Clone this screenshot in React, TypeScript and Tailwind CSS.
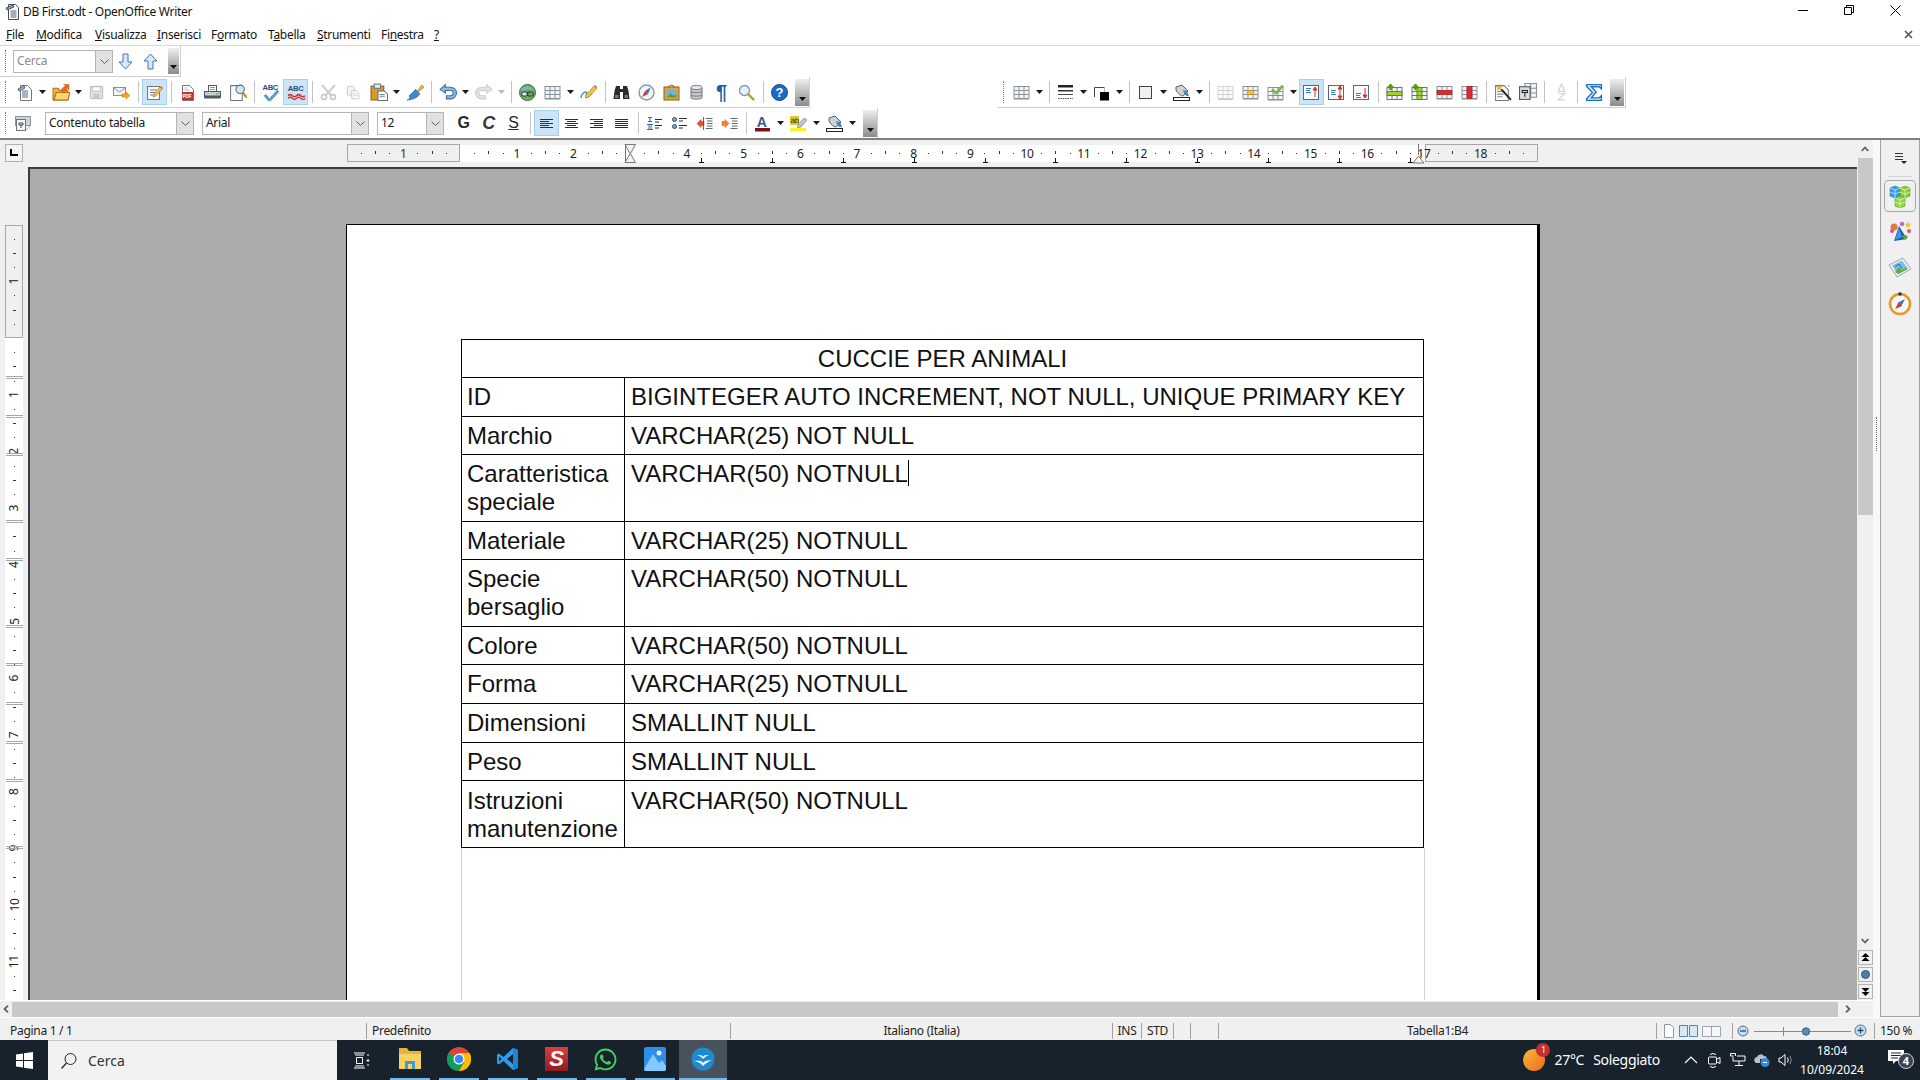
import React from "react";
import { FaWhatsapp } from "react-icons/fa";

type C = { children?: React.ReactNode };
const Sv = ({ children, s = 17 }: C & { s?: number }) => (
  <svg width={s} height={s} viewBox="0 0 17 17" className="block shrink-0">{children}</svg>
);
const Page = ({ x = 3, y = 1, w = 11, h = 15, st = "#6b7785" }: any) => (
  <path d={`M${x + .5} ${y + .5}h${w - 4}l4 4v${h - 4}h-${w}z`} fill="#fff" stroke={st} />
);
const Grid = ({ st = "#8b9199", bg = "#f4f5f6" }: any) => (
  <g>
    <rect x="1" y="2.5" width="15" height="12" fill={bg} stroke={st} />
    <path d="M1 6.5h15M1 10.5h15M6 2.5v12M11 2.5v12" stroke={st} fill="none" />
    <path d="M1 15.5h15" stroke="#c4c7ca" />
  </g>
);
const Tiny = ({ x, y, size, fill, children, weight = 700 }: any) => (
  <text x={x} y={y} fontSize={size} fill={fill} fontWeight={weight} fontFamily="Liberation Sans, sans-serif">{children}</text>
);

const Ic: Record<string, React.ReactNode> = {
  dn: <Sv><path d="M6 1h5v8h4l-6.500 7L2 9h4z" fill="#dbe9f6" stroke="#3f74a8" /></Sv>,
  up: <Sv><path d="M6 16h5V8h4L8.500 1 2 8h4z" fill="#dbe9f6" stroke="#3f74a8" /></Sv>,
  neww: <Sv><Page x={4} y={1} /><path d="M2 5l6-3 1 2-6 3zM6 7h6M6 9h6M6 11h6M6 13h6" stroke="#46586b" fill="#9fb2c4" strokeWidth=".9" /></Sv>,
  open: <Sv s={18}><path d="M1 5h5l1 2h8v9H1z" fill="#f0b43c" stroke="#a8701a" /><path d="M2 16l2-7h13l-2 7z" fill="#fbd46a" stroke="#a8701a" /><path d="M8 7l5-5-2-.5h5v5l-1.3-1.700L11 9z" fill="#ee6c1e" stroke="#c24a10" strokeWidth=".5" /></Sv>,
  save: <Sv s={15}><rect x="1.500" y="1.500" width="14" height="14" rx="1" fill="#e2e2e2" stroke="#b0b0b0" /><rect x="4" y="2" width="9" height="5" fill="#fafafa" stroke="#c0c0c0" /><rect x="5" y="10" width="7" height="5" fill="#c8c8c8" /></Sv>,
  mail: <Sv><rect x=".5" y="3.500" width="12" height="8" fill="#f5f5f5" stroke="#8a8f96" /><path d="M1 4l5.500 4L12 4" fill="none" stroke="#8a8f96" /><path d="M9 10h4V8l4 3.500-4 3.500v-2H9z" fill="#f2a020" stroke="#c77c10" strokeWidth=".5" /></Sv>,
  edit: <Sv><rect x="1.500" y="2.500" width="12" height="13" fill="#fff" stroke="#6b7785" /><path d="M4 6h7M4 8.500h5M4 11h4" stroke="#6b7785" /><path d="M7 13l1-3 6-7 2 2-6 7z" fill="#f6c244" stroke="#a0701a" strokeWidth=".6" /><path d="M14 3l1-1 2 2-1 1z" fill="#e2574c" /></Sv>,
  pdf: <Sv><Page x={3} y={1} w={11} h={15} /><path d="M5.500 4h3M5.500 6h5" stroke="#bbb" /><rect x="3" y="8" width="11" height="8" fill="#c9302c" /><Tiny x={3.6} y={14} size={4.8} fill="#fff">PDF</Tiny></Sv>,
  print: <Sv><rect x="4.500" y="1.500" width="8" height="6" fill="#fff" stroke="#4f5a66" /><path d="M6 3.500h5M6 5.500h5" stroke="#8b97a5" /><rect x=".5" y="7.500" width="16" height="6" fill="#c9ced3" stroke="#4f5a66" /><rect x=".5" y="11.500" width="16" height="3" fill="#4f5a66" /><rect x="12" y="9" width="3" height="1.500" fill="#8fc13e" /></Sv>,
  prev: <Sv s={18}><Page x={1} y={2} w={11} h={14} /><circle cx="10.500" cy="6" r="4" fill="#cfe6f7" stroke="#5d6c7b" /><path d="M13 9l4 5" stroke="#c48a20" strokeWidth="2" /></Sv>,
  spell: <Sv s={18}><Tiny x={.5} y={7} size={7.2} fill="#2a4d78">ABC</Tiny><path d="M4 11l3 4 7-8 2 1-9 10-5-6z" fill="#5fa4dc" stroke="#2f6ea6" strokeWidth=".6" /></Sv>,
  auto: <Sv s={18}><Tiny x={.8} y={8} size={7.2} fill="#2a4d78">ABC</Tiny><path d="M1 12q2-2 4 0t4 0 4 0 4 0" fill="none" stroke="#d12d2d" strokeWidth="1.500" /><path d="M1 14.500q2-2 4 0t4 0 4 0 4 0" fill="none" stroke="#d12d2d" strokeWidth="1.200" /></Sv>,
  cut: <Sv><path d="M2 1l9 10M15 1L6 11" stroke="#cfcfcf" strokeWidth="2" /><circle cx="4" cy="13" r="2.500" fill="none" stroke="#c4c4c4" strokeWidth="1.500" /><circle cx="13" cy="13" r="2.500" fill="none" stroke="#c4c4c4" strokeWidth="1.500" /></Sv>,
  copy: <Sv s={15}><path d="M1.500 1.500h6l2 2v8h-8z" fill="#f4f4f4" stroke="#c8c8c8" /><path d="M6.500 6.500h6l2 2v7h-8z" fill="#fafafa" stroke="#c8c8c8" /><path d="M8 10h5M8 12h5" stroke="#d8d8d8" /></Sv>,
  paste: <Sv s={18}><rect x="1" y="3" width="12" height="13" fill="#d99b2b" stroke="#8c5f10" /><rect x="4" y="1" width="6" height="4" fill="#e9e9e9" stroke="#6b7785" /><path d="M7.500 7.500h6l3 3v6h-9z" fill="#fff" stroke="#5c6d80" /><path d="M9 11h5M9 13h5" stroke="#7a8a9a" /></Sv>,
  brush: <Sv s={18}><path d="M11 7l4-5 2 2-5 4z" fill="#e9bb3e" stroke="#9b7412" strokeWidth=".6" /><path d="M9 6l4 4c-1 3-6 6-12 6 4-1 2-3 2-4 1-1 4-3 6-6z" fill="#3f86d6" stroke="#1e568f" strokeWidth=".6" /></Sv>,
  undo: <Sv s={18}><path d="M5 4h6a5.500 5.500 0 0 1 0 11H7v-3h4a2.500 2.500 0 0 0 0-5H6v2.500L1 6 6 1.500V4z" fill="#8eb9e0" stroke="#3f6f9e" /></Sv>,
  redo: <Sv s={18}><path d="M12 4H6a5.500 5.500 0 0 0 0 11h4v-3H6a2.500 2.500 0 0 1 0-5h5v2.500L16 6 11 1.500V4z" fill="#e4e4e4" stroke="#cdcdcd" /></Sv>,
  link: <Sv><circle cx="8.500" cy="8.500" r="8" fill="#6fae59" stroke="#3f6e3a" /><path d="M3 4q5-3 10 0l1 3-5-2-4 2-3-1z" fill="#76b8c9" /><rect x="2.500" y="8" width="6.500" height="4" rx="2" fill="#d8e6ea" stroke="#26323c" /><rect x="8" y="8" width="6.500" height="4" rx="2" fill="none" stroke="#26323c" /></Sv>,
  grid: <Sv><Grid /></Sv>,
  draw: <Sv><path d="M1 14c0-4 3-6 5-6s-1 5 1 5 4-3 5-4" fill="none" stroke="#3a8fd8" strokeWidth="1.400" /><path d="M6 11L14 2l3 2-8 9-3.500 1z" fill="#f3c24e" stroke="#9a7415" strokeWidth=".6" /><path d="M14 2l1-1 2 2-1 1z" fill="#e0574f" /></Sv>,
  bino: <Sv><path d="M.5 15l1-8 1.500-5h4v3h3V2h4l1.500 5 1 8H10V8H7v7z" fill="#2b2b2b" /><rect x="2" y="11" width="3.500" height="3" fill="#777" /><rect x="11.500" y="11" width="3.500" height="3" fill="#777" /></Sv>,
  nav: <Sv><circle cx="8.500" cy="8.500" r="7.500" fill="#f1f3f5" stroke="#8e98a3" strokeWidth="1.400" /><path d="M12.500 3.500L7 7l3 3z" fill="#3470c4" /><path d="M4 13l6-3-3-3z" fill="#d8342c" /></Sv>,
  gal: <Sv><path d="M5 3l3.500-2L12 3" fill="none" stroke="#6b5530" /><rect x="1" y="3" width="15" height="13" fill="#e6a337" stroke="#8a5f14" /><rect x="3.500" y="5.500" width="10" height="8" fill="#6fb4e0" /><path d="M3.500 13.500l4-4 3 2 3-1v3z" fill="#5d9f38" /></Sv>,
  db: <Sv><path d="M3 4v10c0 1.500 11 1.500 11 0V4" fill="#c9cdd1" stroke="#6f757b" /><ellipse cx="8.500" cy="3.500" rx="5.500" ry="2.200" fill="#e6e8ea" stroke="#6f757b" /><path d="M3 7.500c0 1.500 11 1.500 11 0M3 11c0 1.500 11 1.500 11 0" fill="none" stroke="#6f757b" /></Sv>,
  mag: <Sv><circle cx="6.500" cy="6.500" r="5" fill="#e7f2fb" stroke="#7f97ad" strokeWidth="1.300" /><path d="M10.500 10.500l5 5" stroke="#c99426" strokeWidth="2.400" strokeLinecap="round" /></Sv>,
  help: <Sv><circle cx="8.500" cy="8.500" r="8" fill="#1f68c2" stroke="#124a92" /><Tiny x={4.6} y={13.4} size={13} fill="#fff">?</Tiny></Sv>,
  style: <Sv><rect x=".5" y="1.500" width="15" height="9" fill="#cfd3d7" stroke="#8e959c" /><rect x="1.500" y="4.500" width="9" height="11" fill="#f4f5f5" stroke="#6d747b" /><path d="M4 8h4v2H4zM6 10v3" stroke="#3c4650" fill="none" /><path d="M11 15l4-4" stroke="#aeb4ba" /></Sv>,
  al: <Sv><path d="M2 4.500h13M2 6.500h9M2 8.500h13M2 10.500h9M2 12.500h13" stroke="#26303a" /></Sv>,
  ac: <Sv><path d="M2 4.500h13M4 6.500h9M2 8.500h13M4 10.500h9M2 12.500h13" stroke="#26303a" /></Sv>,
  ar: <Sv><path d="M2 4.500h13M6 6.500h9M2 8.500h13M6 10.500h9M2 12.500h13" stroke="#26303a" /></Sv>,
  aj: <Sv><path d="M2 4.500h13M2 6.500h13M2 8.500h13M2 10.500h13M2 12.500h13" stroke="#26303a" /></Sv>,
  num: <Sv><path d="M2 2.500h4M4 2.500v4M2 6.500h4M1 9.500h6M3 9.500v5M5 9.500v5M1 14.500h6" stroke="#2f6ea6" fill="none" /><path d="M9 4.500h7M9 7h4M9 10.500h7M9 13h4" stroke="#26303a" /></Sv>,
  bul: <Sv><circle cx="3.500" cy="4.500" r="2" fill="#7fa8cc" stroke="#2a4d78" /><circle cx="3.500" cy="11.500" r="2" fill="#7fa8cc" stroke="#2a4d78" /><path d="M8 3.500h8M8 6h4M8 10.500h8M8 13h4" stroke="#26303a" /></Sv>,
  ded: <Sv><path d="M1 8.500l4-4v2h3v4H5v2z" fill="#e8522a" stroke="#b83a1a" strokeWidth=".5" /><path d="M9.500 3.500h7M11 6h5.500M11 8.500h5.500M11 11h5.500M9.500 13.500h7M7.500 2v13" stroke="#3c5a78" strokeWidth=".9" /></Sv>,
  ind: <Sv><path d="M8 8.500l-4-4v2H1v4h3v2z" fill="#f0862a" stroke="#c55a12" strokeWidth=".5" /><path d="M9.500 3.500h7M11 6h5.500M11 8.500h5.500M11 11h5.500M9.500 13.500h7" stroke="#3c5a78" strokeWidth=".9" /></Sv>,
  fc: <Sv><Tiny x={2.8} y={12} size={14} fill="#2f5c8f">A</Tiny><rect x="1" y="13" width="15" height="3.500" fill="#7b1416" /></Sv>,
  hl: <Sv><rect x="0" y="1" width="9" height="9" fill="#e3c72a" /><Tiny x={.6} y={8.4} size={8} fill="#26303a" weight={400}>ab</Tiny><path d="M8 10L14 3l3 2-6 7-3.500 1z" fill="#bfc6cc" stroke="#6c747c" strokeWidth=".6" /><rect x="0" y="13" width="16" height="3.500" fill="#f8f32b" /></Sv>,
  bgc: <Sv><path d="M3 3l6-2 6 6-5 5c-2 0-5-2-7-6z" fill="#cdd2d6" stroke="#59626b" /><path d="M10 6l4 1 2 5c-3 1-5-2-6-6z" fill="#3a86c8" /><rect x=".5" y="13.500" width="16" height="3" fill="#fff" stroke="#222" /></Sv>,
  lines: <Sv><rect x="1" y="1" width="15" height="2.500" fill="#222" /><rect x="1" y="6" width="15" height="1.500" fill="#333" /><path d="M1 10.500h15" stroke="#444" /><path d="M1 14.500h15" stroke="#444" strokeDasharray="1.400 1" /></Sv>,
  bcolor: <Sv><path d="M1.500 13V3.500h10" fill="none" stroke="#444" /><path d="M11.500 3.500V8" stroke="#bbb" /><rect x="7" y="8" width="9" height="8.500" fill="#000" /></Sv>,
  box: <Sv><rect x="2.500" y="2.500" width="12" height="12" fill="#eef0f2" stroke="#3d444b" /></Sv>,
  gridl: <Sv><Grid st="#d0d3d6" bg="#fbfbfb" /></Sv>,
  gridy: <Sv><Grid /><rect x="5" y="6.500" width="7" height="4" fill="#f0c23c" stroke="#b88c18" strokeWidth=".6" /></Sv>,
  gridc: <Sv><g transform="translate(0,1)"><Grid /></g><path d="M6 5l3 3 6-7 1.500 1.500L9 10.500 4.500 6.500z" fill="#7fc241" stroke="#4e8a20" strokeWidth=".5" /></Sv>,
  vt: <Sv><rect x=".5" y="1.500" width="15" height="14" fill="#fbfbfb" stroke="#5c6670" /><path d="M3 4.500h5M3 6.500h4M3 8.500h5" stroke="#3a7fc0" /><path d="M12 13V4M10 6l2-3 2 3z" stroke="#d0342c" fill="#d0342c" /></Sv>,
  vc: <Sv><rect x=".5" y="1.500" width="15" height="14" fill="#fbfbfb" stroke="#5c6670" /><path d="M3 6.500h5M3 8.500h4M3 10.500h5" stroke="#3a7fc0" /><path d="M12 4v9M10 5l2-3 2 3zM10 12l2 3 2-3z" stroke="#d0342c" fill="#d0342c" /></Sv>,
  vb: <Sv><rect x=".5" y="1.500" width="15" height="14" fill="#fbfbfb" stroke="#5c6670" /><path d="M3 9.500h5M3 11.500h4M3 13.500h5" stroke="#3a7fc0" /><path d="M12 4v9M10 11l2 3 2-3z" stroke="#d0342c" fill="#d0342c" /></Sv>,
  irow: <Sv><rect x="1" y="3.500" width="15" height="12" fill="#f4f5f6" stroke="#6f7b6a" /><path d="M1 7.500h15M6 3.500v12M11 3.500v12" stroke="#6f7b6a" /><rect x="1" y="7.500" width="15" height="4" fill="#9fd22c" stroke="#5b9016" /><path d="M4.500 0v6M1.500 3h6" stroke="#4e9a12" strokeWidth="2.400" /></Sv>,
  icol: <Sv><rect x="1" y="3.500" width="15" height="12" fill="#f4f5f6" stroke="#6f7b6a" /><rect x="6" y="3.500" width="5" height="12" fill="#9fd22c" stroke="#5b9016" /><path d="M1 7.500h15M1 11.500h15" stroke="#6f7b6a" /><path d="M4.500 0v6M1.500 3h6" stroke="#4e9a12" strokeWidth="2.400" /></Sv>,
  drow: <Sv><Grid /><rect x="1" y="6.500" width="15" height="4" fill="#e8252a" stroke="#a81a1c" strokeWidth=".6" /></Sv>,
  dcol: <Sv><Grid /><rect x="6" y="2.500" width="5" height="12" fill="#e8252a" stroke="#a81a1c" strokeWidth=".6" /></Sv>,
  wiz: <Sv s={18}><Page x={1} y={2} w={12} h={14} st="#6f7b86" /><path d="M3 8h7M3 10.500h6M3 13h5" stroke="#7f8a96" /><path d="M7 6l9 10" stroke="#222" strokeWidth="1.800" /><path d="M5 1l.7 2 2 .3-1.500 1.300.4 2-1.600-1-1.600 1 .4-2L2.300 3.300l2-.3zM13 1.500l1 2 1-1M15 7l1 1" fill="#e9b82c" stroke="#c89210" strokeWidth=".4" /></Sv>,
  prop: <Sv s={18}><rect x="5.500" y=".5" width="11" height="13" fill="#f4f5f6" stroke="#8b9199" /><path d="M5.500 5h11M5.500 9.500h11M11 .5v13" stroke="#8b9199" /><rect x=".5" y="3.500" width="10" height="12" fill="#d9dde1" stroke="#4f5860" /><path d="M3 7h5v2H3zM5.500 9v4" stroke="#222" fill="none" /></Sv>,
  sort: <Sv s={18}><path d="M9 1l-3 7h6zM6 10h6l-6 6h6" fill="none" stroke="#d5d5d5" strokeWidth="1.200" /></Sv>,
  sum: <Sv s={18}><path d="M1.500 1.500h14v4l-2-2H6l4.500 5L6 14h7.500l2-2v4.500h-14v-1.500l5.500-6L1.500 3z" fill="#d8ecf8" stroke="#1a72c0" strokeWidth="1.300" /></Sv>,
};

const Tb = ({ n, on }: { n: string; on?: boolean }) => (
  <div className={on
    ? "flex items-center justify-center w-[25px] h-[26px] shrink-0 bg-[#cce4f7] border border-[#a6d2f0]"
    : "flex items-center justify-center w-[25px] h-[26px] shrink-0"}>{Ic[n]}</div>
);
const Ar = ({ dim }: { dim?: boolean }) => (
  <div className="w-[11px] h-[26px] shrink-0 flex items-center justify-center">
    <svg width="7" height="4" viewBox="0 0 7 4" className="block"><path d="M0 0h7L3.500 4z" fill={dim ? "#b9b9b9" : "#1a1a1a"} /></svg>
  </div>
);
const Sp = () => (
  <div className="w-[8px] h-[26px] shrink-0 flex items-center justify-center"><div className="w-px h-[22px] bg-[#c4c4c4]" /></div>
);
const Grip = () => <div className="w-0 h-[22px] shrink-0 border-l border-dotted border-[#777]" />;
const Over = ({ wide }: { wide?: boolean }) => (
  <div className={wide
    ? "w-[14px] h-[27px] shrink-0 flex items-end justify-center pb-[5px] bg-gradient-to-b from-[#efefef] to-[#8c8c8c]"
    : "w-[11px] h-[26px] shrink-0 flex items-end justify-center pb-[5px] bg-gradient-to-b from-[#efefef] to-[#8c8c8c]"}>
    <svg width="7" height="4" viewBox="0 0 7 4" className="block"><path d="M0 0h7L3.500 4z" fill="#111" /></svg>
  </div>
);
const Combo = ({ t, cls, dim }: { t: string; cls: string; dim?: boolean }) => (
  <div className={`${cls} h-[23px] shrink-0 flex items-center border border-[#b4b4b4] bg-white`}>
    <span className={dim ? "flex-1 pl-[3px] text-[12px] leading-none text-[#8a8a8a]" : "flex-1 pl-[3px] text-[12px] leading-none text-[#1a1a1a]"}>{t}</span>
    <div className="w-[17px] h-[21px] flex items-center justify-center bg-[#e1e1e1] border-l border-[#b4b4b4]">
      <svg width="9" height="5" viewBox="0 0 9 5" className="block"><path d="M.5.500l4 4 4-4" fill="none" stroke="#606060" /></svg>
    </div>
  </div>
);

const HRuler = () => {
  const o = 460, u = 56.7;
  const els: React.ReactNode[] = [];
  for (let n = -3; n <= 19; n++) {
    const x = o + n * u;
    for (const f of [0.25, 0.75]) {
      const q = x + f * u;
      if (q > 350 && q < 1532) els.push(<rect key={`d${n}${f}`} x={Math.round(q)} y={153} width={1} height={1} fill="#333" />);
    }
    const m = x + 0.5 * u;
    if (m > 350 && m < 1532) els.push(<rect key={`m${n}`} x={Math.round(m)} y={151} width={1} height={3} fill="#333" />);
  }
  const nums = [[-1, "1"], [1, "1"], [2, "2"], [4, "4"], [5, "5"], [6, "6"], [7, "7"], [8, "8"], [9, "9"], [10, "10"], [11, "11"], [12, "12"], [13, "13"], [14, "14"], [15, "15"], [16, "16"], [17, "17"], [18, "18"]] as [number, string][];
  const tabs = [0, 1, 2, 3, 4, 5, 6, 7, 8, 9, 10].map((i) => Math.round(630 + 70.9 * (i + 1)));
  return (
    <svg width="1857" height="27" viewBox="0 140 1857 27" className="block">
      <rect x="5.500" y="144.500" width="17" height="17" fill="#f4f4f4" stroke="#b0b0b0" />
      <path d="M11 149v6h7" fill="none" stroke="#000" strokeWidth="2" />
      <rect x="460" y="145" width="965" height="17" fill="#fff" />
      <rect x="347.500" y="144.500" width="112" height="17" fill="#f0f0f0" stroke="#a8a8a8" />
      <rect x="1425.500" y="144.500" width="112" height="17" fill="#f0f0f0" stroke="#a8a8a8" />
      {els}
      {nums.map(([n, t]) => (
        <text key={n} x={o + n * u} y={158} textAnchor="middle" fontSize="12" fill={n === -1 ? "#4a2a2a" : "#222"} fontFamily="Noto Sans, sans-serif">{t}</text>
      ))}
      {tabs.map((x) => <path key={x} d={`M${x + .5} 158v4M${x - 2} 162.500h5`} stroke="#111" fill="none" />)}
      <path d="M625 144.500h10.500l-5 9 5 9H625l5-9z" fill="#f2f2f2" stroke="#777" />
      <path d="M625.500 144v19" stroke="#777" />
      <path d="M1418.500 144v11" stroke="#777" />
      <path d="M1413 163l5.500-7 5.500 7z" fill="#f4f4f4" stroke="#777" />
    </svg>
  );
};

const VRuler = () => {
  const o = 338, u = 56.7;
  const rows = [377, 416, 454, 521, 559, 626, 664, 703, 742, 780, 847];
  const els: React.ReactNode[] = [];
  for (let n = -2; n <= 12; n++) {
    const y = o + n * u;
    for (const f of [0.25, 0.75]) {
      const q = y + f * u;
      if (q > 228 && q < 1000) els.push(<rect key={`d${n}${f}`} x={14} y={Math.round(q)} width={1} height={1} fill="#333" />);
    }
    const m = y + 0.5 * u;
    if (m > 228 && m < 1000) els.push(<rect key={`m${n}`} x={13} y={Math.round(m)} width={3} height={1} fill="#333" />);
  }
  return (
    <svg width="28" height="833" viewBox="0 167 28 833" className="block">
      <rect x="5" y="338" width="18" height="662" fill="#fff" />
      <rect x="5.500" y="225.500" width="17" height="112" fill="#f0f0f0" stroke="#a8a8a8" />
      {els}
      {[-1, 1, 2, 3, 4, 5, 6, 7, 8, 9, 10, 11].map((n) => {
        const y = o + n * u;
        return <text key={n} x="14" y={y} transform={`rotate(-90 14 ${y})`} textAnchor="middle" dominantBaseline="central" fontSize="12" fill="#222" fontFamily="Noto Sans, sans-serif">{n === -1 ? 1 : n}</text>;
      })}
      {rows.map((y) => <path key={y} d={`M6 ${y - .5}h17M6 ${y + 1.500}h17`} stroke="#a8a8a8" fill="none" />)}
    </svg>
  );
};

const rowsData: [string, string, string][] = [
  ["ID", "BIGINTEGER AUTO INCREMENT, NOT NULL, UNIQUE PRIMARY KEY", "h-[39px]"],
  ["Marchio", "VARCHAR(25) NOT NULL", "h-[38px]"],
  ["Caratteristica speciale", "VARCHAR(50) NOTNULL", "h-[67px]"],
  ["Materiale", "VARCHAR(25) NOTNULL", "h-[38px]"],
  ["Specie bersaglio", "VARCHAR(50) NOTNULL", "h-[67px]"],
  ["Colore", "VARCHAR(50) NOTNULL", "h-[38px]"],
  ["Forma", "VARCHAR(25) NOTNULL", "h-[39px]"],
  ["Dimensioni", "SMALLINT NULL", "h-[39px]"],
  ["Peso", "SMALLINT NULL", "h-[38px]"],
  ["Istruzioni manutenzione", "VARCHAR(50) NOTNULL", "h-[67px]"],
];

const SideIcon = ({ n }: { n: number }) => {
  if (n === 0) return (
    <svg width="22" height="23" viewBox="0 0 22 23" className="block">
      <path d="M1 3l5-2 5 2v8l-5 2-5-2z" fill="#2f9be8" stroke="#1a6eb0" strokeWidth=".5" />
      <path d="M11 3l5-2 5 2v8l-5 2-5-2z" fill="#86cf32" stroke="#4f9212" strokeWidth=".5" />
      <path d="M6 13l5-2 5 2v8l-5 2-5-2z" fill="#8fd636" stroke="#4f9212" strokeWidth=".5" />
      <path d="M1 3l5 2 5-2M6 5v8M11 3l5 2 5-2M16 5v8M6 13l5 2 5-2M11 15v8M1 7l5 2 5-2M11 7l5 2 5-2M6 17l5 2 5-2" fill="none" stroke="#eaf8ff" strokeWidth=".7" />
    </svg>
  );
  if (n === 1) return (
    <svg width="24" height="24" viewBox="0 0 24 24" className="block">
      <path d="M6 21L11 6l8 13z" fill="#1d5ea8" />
      <path d="M7 20L11 8l3 9z" fill="#3a9ae0" />
      <circle cx="6" cy="7" r="3.500" fill="#e2783a" /><circle cx="4" cy="11" r="2" fill="#e24f9a" />
      <circle cx="14" cy="4" r="2.200" fill="#c85fd0" /><path d="M20 1l1 2.500 2.500.3-2 1.700.6 2.500-2.100-1.300-2.100 1.300.6-2.500-2-1.700 2.500-.3z" fill="#f2c23c" />
      <circle cx="21" cy="11" r="2" fill="#e24f6a" /><path d="M14 16a4 4 0 0 1 6 1l-3 3z" fill="#5aa83a" />
    </svg>
  );
  if (n === 2) return (
    <svg width="24" height="24" viewBox="0 0 24 24" className="block">
      <path d="M1 9L15 2l8 11-14 8z" fill="#eef2f5" stroke="#9aa4ad" />
      <path d="M4 9.500L14 4.500l6 8-10 6z" fill="#78c0e8" />
      <path d="M7 16l4-5 3 3 3-2 3 1-10 5z" fill="#6aa83a" />
      <path d="M7 11l4-3 3 4" fill="none" stroke="#2a5c90" />
    </svg>
  );
  return (
    <svg width="24" height="24" viewBox="0 0 24 24" className="block">
      <circle cx="12" cy="12" r="10" fill="#f8f8f8" stroke="#e59a22" strokeWidth="2.600" />
      <path d="M17 7l-7 3.500 3.500 3.500z" fill="#4a78c0" /><path d="M7 17l7-3-3.500-3.500z" fill="#d8342c" />
      <circle cx="12" cy="2" r="1.800" fill="#333" />
    </svg>
  );
};

const menu: [React.ReactNode, string][] = [
  [<><u>F</u>ile</>, "w-[30px]"],
  [<><u>M</u>odifica</>, "w-[59px]"],
  [<><u>V</u>isualizza</>, "w-[62px]"],
  [<><u>I</u>nserisci</>, "w-[54px]"],
  [<>F<u>o</u>rmato</>, "w-[57px]"],
  [<>T<u>a</u>bella</>, "w-[49px]"],
  [<><u>S</u>trumenti</>, "w-[64px]"],
  [<>Fi<u>n</u>estra</>, "w-[53px]"],
  [<><u>?</u></>, "w-[14px]"],
];

const Tk = ({ children, on }: C & { on?: boolean }) => (
  <div className={on
    ? "w-[48px] h-[40px] shrink-0 flex flex-col items-center justify-end bg-[#47525c]"
    : "w-[49px] h-[40px] shrink-0 flex flex-col items-center justify-end"}>
    <div className="flex-1 flex items-center justify-center">{children}</div>
    <div className={on ? "w-[48px] h-[2px] bg-[#76b9ed]" : "w-[40px] h-[2px] bg-[#76b9ed]"} />
  </div>
);

export default function App() {
  return (
    <div className="w-[1920px] h-[1080px] flex flex-col overflow-hidden bg-white font-['Noto_Sans',sans-serif] tracking-[-0.3px] text-[#111]">
      {/* title */}
      <div className="h-[24px] shrink-0 flex items-center pl-[5px] pr-[2px]">
        <svg width="15" height="16" viewBox="0 0 15 16" className="block"><path d="M3.500.5h7l3 3v12h-10z" fill="#fff" stroke="#44505c" /><path d="M1 4l7-3 1 2-7 3zM5.500 7h6M5.500 9h6M5.500 11h6M5.500 13h6" stroke="#3d4a58" fill="#8ea2b5" strokeWidth=".9" /></svg>
        <span className="ml-[3px] text-[12px] leading-none">DB First.odt - OpenOffice Writer</span>
        <div className="ml-auto self-start flex">
          <div className="w-[46px] h-[20px] flex items-center justify-center"><div className="w-[10px] h-px bg-black" /></div>
          <div className="w-[46px] h-[20px] flex items-center justify-center">
            <svg width="10" height="10" viewBox="0 0 10 10" className="block"><path d="M.5 2.500h7v7h-7zM2.500 2.500v-2h7v7h-2" fill="none" stroke="#000" /></svg>
          </div>
          <div className="w-[46px] h-[20px] flex items-center justify-center">
            <svg width="11" height="11" viewBox="0 0 11 11" className="block"><path d="M.5.500l10 10M10.500.500l-10 10" stroke="#000" /></svg>
          </div>
        </div>
      </div>
      {/* menu */}
      <div className="h-[22px] shrink-0 flex items-center pl-[6px] pr-[7px] border-b border-[#d9d9d9] text-[12px] leading-none">
        {menu.map(([m, w], i) => <span key={i} className={w}>{m}</span>)}
        <svg width="9" height="9" viewBox="0 0 9 9" className="block ml-auto"><path d="M1 1l7 7M8 1L1 8" stroke="#4c5560" strokeWidth="1.600" /></svg>
      </div>
      {/* row 1 */}
      <div className="h-[31px] shrink-0 flex">
        <div className="w-[181px] flex items-center pl-[5px] border-b border-r border-[#cfcfcf]">
          <Grip />
          <Combo t="Cerca" cls="w-[100px] ml-[7px]" dim />
          <Tb n="dn" />
          <Tb n="up" />
          <div className="ml-[5px]"><Over /></div>
        </div>
      </div>
      {/* row 2 */}
      <div className="h-[31px] shrink-0 flex">
        <div className="w-[810px] flex items-center pl-[5px] border-b border-r border-[#cfcfcf]">
          <Grip /><div className="w-[6px]" />
          <Tb n="neww" /><Ar /><Tb n="open" /><Ar /><Tb n="save" /><Tb n="mail" /><Sp />
          <Tb n="edit" on /><Sp />
          <Tb n="pdf" /><Tb n="print" /><Tb n="prev" /><Sp />
          <Tb n="spell" /><Tb n="auto" on /><Sp />
          <Tb n="cut" /><Tb n="copy" /><Tb n="paste" /><Ar /><Tb n="brush" /><Sp />
          <Tb n="undo" /><Ar /><Tb n="redo" /><Ar dim /><Sp />
          <Tb n="link" /><Tb n="grid" /><Ar /><Tb n="draw" /><Sp />
          <Tb n="bino" /><Tb n="nav" /><Tb n="gal" /><Tb n="db" />
          <div className="w-[25px] h-[26px] shrink-0 flex items-center justify-center text-[20px] leading-none font-bold text-[#1c5fa8] font-['Liberation_Sans']">¶</div>
          <Tb n="mag" /><Sp /><Tb n="help" />
          <div className="ml-[3px]"><Over wide /></div>
        </div>
        <div className="ml-[188px] w-[628px] flex items-center pl-[5px] border-b border-r border-[#cfcfcf]">
          <Grip /><div className="w-[5px]" />
          <Tb n="grid" /><Ar /><Sp />
          <Tb n="lines" /><Ar /><Tb n="bcolor" /><Ar /><Sp />
          <Tb n="box" /><Ar /><Tb n="bgc" /><Ar /><Sp />
          <Tb n="gridl" /><Tb n="gridy" /><Tb n="gridc" /><Ar />
          <Tb n="vt" on /><Tb n="vc" /><Tb n="vb" /><Sp />
          <Tb n="irow" /><Tb n="icol" /><Tb n="drow" /><Tb n="dcol" /><Sp />
          <Tb n="wiz" /><Tb n="prop" /><Sp /><Tb n="sort" /><Sp /><Tb n="sum" />
          <div className="ml-[4px]"><Over wide /></div>
        </div>
      </div>
      {/* row 3 */}
      <div className="h-[32px] shrink-0 flex border-b-2 border-[#808080]">
        <div className="w-[878px] flex items-center pl-[5px] border-r border-[#cfcfcf]">
          <Grip /><div className="w-[5px]" />
          <Tb n="style" />
          <Combo t="Contenuto tabella" cls="w-[149px] ml-[9px]" />
          <Combo t="Arial" cls="w-[167px] ml-[8px]" />
          <Combo t="12" cls="w-[67px] ml-[8px]" />
          <div className="w-[7px]" />
          <div className="w-[25px] h-[26px] shrink-0 flex items-center justify-center text-[16px] leading-none font-bold text-[#2a2a2a] font-['Liberation_Sans']">G</div>
          <div className="w-[25px] h-[26px] shrink-0 flex items-center justify-center text-[18px] leading-none italic font-bold text-[#3a3a3a] font-['Liberation_Sans']">C</div>
          <div className="w-[25px] h-[26px] shrink-0 flex items-center justify-center text-[16px] leading-none underline text-[#2a2a2a] font-['Liberation_Sans']">S</div>
          <Sp />
          <Tb n="al" on /><Tb n="ac" /><Tb n="ar" /><Tb n="aj" /><Sp />
          <Tb n="num" /><Tb n="bul" /><Tb n="ded" /><Tb n="ind" /><Sp />
          <Tb n="fc" /><Ar /><Tb n="hl" /><Ar /><Tb n="bgc" /><Ar />
          <div className="ml-[5px]"><Over wide /></div>
        </div>
      </div>
      {/* workspace */}
      <div className="flex-1 min-h-0 flex bg-[#f0f0f0]">
        <div className="w-[1873px] shrink-0 flex flex-col">
          <div className="flex-1 min-h-0 flex">
            <div className="w-[1857px] shrink-0 flex flex-col">
              <div className="h-[27px] shrink-0"><HRuler /></div>
              <div className="flex-1 min-h-0 flex">
                <div className="w-[28px] shrink-0"><VRuler /></div>
                <div className="flex-1 min-w-0 flex flex-col bg-[#ababab] border-t-2 border-l-2 border-[#3c3c3c] pl-[316px] pt-[55px] pr-[316px] overflow-hidden">
                  <div className="w-[1194px] flex-1 min-h-0 shrink-0 flex flex-col bg-white border-t border-l border-r-[3px] border-black pl-[114px] pt-[114px] pr-[112px] font-['Liberation_Sans'] text-[24px] leading-[28px] tracking-normal">
                    <table className="w-[963px] table-fixed border-collapse border border-black">
                      <colgroup><col className="w-[163px]" /><col /></colgroup>
                      <tbody>
                        <tr className="h-[38px]"><td colSpan={2} className="border border-black text-center align-top pt-[5px]">CUCCIE PER ANIMALI</td></tr>
                        {rowsData.map(([a, b, h], i) => (
                          <tr key={a} className={h}>
                            <td className={i === 9 ? "border border-black align-top pt-[6px] pl-[5px] pr-[4px]" : "border border-black align-top pt-[5px] pl-[5px] pr-[4px]"}>{a}</td>
                            <td className={i === 9 ? "border border-black align-top pt-[6px] pl-[6px]" : "border border-black align-top pt-[5px] pl-[6px]"}>
                              {b}{i === 2 ? <span className="inline-block w-px h-[26px] bg-black align-top" /> : null}
                            </td>
                          </tr>
                        ))}
                      </tbody>
                    </table>
                    <div className="flex-1 border-x border-[#d0d0d0]" />
                  </div>
                </div>
              </div>
            </div>
            {/* v scrollbar */}
            <div className="w-[16px] shrink-0 flex flex-col items-center">
              <div className="h-[18px] w-full flex items-center justify-center">
                <svg width="8" height="6" viewBox="0 0 8 6" className="block"><path d="M.7 5L4 1.500 7.300 5" fill="none" stroke="#606060" strokeWidth="1.800" /></svg>
              </div>
              <div className="h-[357px] w-[15px] bg-[#c8c8c8]" />
              <div className="flex-1" />
              <div className="h-[14px] flex items-center justify-center">
                <svg width="8" height="6" viewBox="0 0 8 6" className="block"><path d="M.7 1L4 4.500 7.300 1" fill="none" stroke="#606060" strokeWidth="1.800" /></svg>
              </div>
              <div className="w-[15px] h-[15px] mt-[2px] border border-[#b4b4b4] flex items-center justify-center">
                <svg width="9" height="9" viewBox="0 0 9 9" className="block"><path d="M4.500 0l4 4H.5zM4.500 4l4 4H.5z" fill="#000" /></svg>
              </div>
              <div className="w-[15px] h-[15px] mt-[2px] border border-[#b4b4b4] flex items-center justify-center">
                <div className="w-[9px] h-[9px] rounded-full bg-[#4f7ea8] border border-[#2f5578]" />
              </div>
              <div className="w-[15px] h-[15px] mt-[2px] mb-[1px] border border-[#b4b4b4] flex items-center justify-center">
                <svg width="9" height="9" viewBox="0 0 9 9" className="block"><path d="M.5 1h8l-4 4zM.5 5h8l-4 4z" fill="#000" /></svg>
              </div>
            </div>
          </div>
          {/* h scrollbar */}
          <div className="h-[17px] shrink-0 flex items-center border-t border-white">
            <div className="w-[12px] flex items-center justify-center">
              <svg width="6" height="8" viewBox="0 0 6 8" className="block"><path d="M5 .7L1.500 4 5 7.300" fill="none" stroke="#606060" strokeWidth="1.800" /></svg>
            </div>
            <div className="w-[1826px] h-[15px] bg-[#c8c8c8]" />
            <div className="w-[19px] flex items-center justify-center">
              <svg width="6" height="8" viewBox="0 0 6 8" className="block"><path d="M1 .7L4.500 4 1 7.300" fill="none" stroke="#606060" strokeWidth="1.800" /></svg>
            </div>
          </div>
        </div>
        {/* splitter + sidebar */}
        <div className="w-[7px] shrink-0 flex items-center justify-center pb-[290px] bg-[#f8f8f8]">
          <div className="h-[34px] w-0 border-l border-dotted border-[#666]" />
        </div>
        <div className="flex-1 flex flex-col items-center border-l border-r border-b border-[#a0a0a0] bg-[#f0f0f0]">
          <div className="h-[36px] flex items-center justify-center">
            <svg width="14" height="12" viewBox="0 0 14 12" className="block"><path d="M2 1.500h8M2 4.500h8M2 7.500h8" stroke="#333" /><path d="M8 9h6l-3 3z" fill="#222" /></svg>
          </div>
          <div className="w-[24px] h-px bg-[#d4d4d4] mb-[3px]" />
          <div className="w-[32px] h-[32px] flex items-center justify-center border border-[#a8a8a8] rounded-[4px]"><SideIcon n={0} /></div>
          <div className="h-[36px] flex items-center mt-[2px]"><SideIcon n={1} /></div>
          <div className="h-[36px] flex items-center"><SideIcon n={2} /></div>
          <div className="h-[36px] flex items-center"><SideIcon n={3} /></div>
        </div>
      </div>
      {/* status */}
      <div className="h-[23px] shrink-0 flex items-center pt-[3px] bg-[#f0f0f0] text-[12px] leading-none text-[#222] border-t border-white">
        <div className="w-[366px] pl-[10px] shrink-0">Pagina 1 / 1</div>
        <div className="w-[364px] h-[16px] shrink-0 flex items-center pl-[5px] border-l border-[#a0a0a0]">Predefinito</div>
        <div className="w-[382px] h-[16px] shrink-0 flex items-center justify-center border-l border-[#a0a0a0]">Italiano (Italia)</div>
        <div className="w-[29px] h-[16px] shrink-0 flex items-center justify-center border-l border-[#a0a0a0]">INS</div>
        <div className="w-[32px] h-[16px] shrink-0 flex items-center justify-center border-l border-[#a0a0a0]">STD</div>
        <div className="w-[17px] h-[16px] shrink-0 border-l border-[#a0a0a0]" />
        <div className="w-[28px] h-[16px] shrink-0 border-l border-[#a0a0a0]" />
        <div className="w-[438px] h-[16px] shrink-0 flex items-center justify-center border-l border-[#a0a0a0]">Tabella1:B4</div>
        <div className="w-[76px] h-[16px] shrink-0 flex items-center pl-[6px] gap-[4px] border-l border-[#a0a0a0]">
          <svg width="12" height="14" viewBox="0 0 12 14" className="block"><path d="M1.500.5h6l3 3v10h-9z" fill="#fff" stroke="#8a9aa8" /></svg>
          <svg width="19" height="14" viewBox="0 0 19 14" className="block"><path d="M.5 1.500h8v11h-8zM10.500 1.500h8v11h-8z" fill="#d6e8f6" stroke="#4f86b8" /></svg>
          <svg width="19" height="14" viewBox="0 0 19 14" className="block"><path d="M.5 2.500h9v10h-9zM9.500 2.500h9v10h-9z" fill="#f6f6f6" stroke="#9aa6b2" /></svg>
        </div>
        <div className="w-[142px] h-[16px] shrink-0 flex items-center pl-[4px] border-l border-[#a0a0a0]">
          <svg width="12" height="12" viewBox="0 0 12 12" className="block"><circle cx="6" cy="6" r="5" fill="#c8dcee" stroke="#4a6e90" /><path d="M3 6h6" stroke="#234a70" strokeWidth="1.300" /></svg>
          <svg width="102" height="14" viewBox="0 0 102 14" className="block ml-[4px]">
            <path d="M1 7.500h97" stroke="#8a8a8a" />
            <path d="M30.500 3v9" stroke="#8a8a8a" />
            <circle cx="53" cy="7.500" r="3.700" fill="#5d8cb4" stroke="#37607f" />
          </svg>
          <svg width="13" height="13" viewBox="0 0 13 13" className="block ml-[-1px]"><circle cx="6.500" cy="6.500" r="5.500" fill="#c8dcee" stroke="#4a6e90" /><path d="M3.500 6.500h6M6.500 3.500v6" stroke="#234a70" strokeWidth="1.300" /></svg>
        </div>
        <div className="flex-1 h-[16px] flex items-center pl-[5px] border-l border-[#a0a0a0]">150 %</div>
      </div>
      {/* taskbar */}
      <div className="h-[40px] shrink-0 flex items-center bg-[#17222d] text-white tracking-normal">
        <div className="w-[48px] flex justify-center">
          <svg width="17" height="17" viewBox="0 0 17 17" className="block"><path d="M0 2.500l7-1v6.500H0zM8 1.300L17 0v8H8zM0 9h7v6.500l-7-1zM8 9h9v8l-9-1.300z" fill="#fff" /></svg>
        </div>
        <div className="w-[289px] h-[40px] flex items-center bg-[#f2f2f2] border-t border-[#c8c8c8] pl-[12px] text-[14px] text-[#333]">
          <svg width="18" height="18" viewBox="0 0 18 18" className="block"><circle cx="10.500" cy="7" r="5.500" fill="none" stroke="#222" /><path d="M6.500 11L1.500 16.500" stroke="#222" strokeWidth="1.200" /></svg>
          <span className="ml-[10px]">Cerca</span>
        </div>
        <div className="w-[48px] flex justify-center">
          <svg width="17" height="17" viewBox="0 0 17 17" className="block"><path d="M2 3h9M2 14h9M3.500 5.500h6v6h-6z" fill="none" stroke="#fff" /><path d="M1 1h11M1 16h11" stroke="#fff" /><path d="M14 3h2M14 8h2v1h-2zM14 13h2" stroke="#fff" /></svg>
        </div>
        <Tk>
          <svg width="22" height="24" viewBox="0 0 22 24" className="block"><path d="M0 1h8l2 3h12v18H0z" fill="#e6b23e" /><path d="M0 7h22v15H0z" fill="#f7d25f" /><path d="M6 22v-8h10v8h-3v-5H9v5z" fill="#3e9be0" /></svg>
        </Tk>
        <Tk>
          <svg width="24" height="24" viewBox="0 0 24 24" className="block">
            <circle cx="12" cy="12" r="12" fill="#db4437" />
            <path d="M12 12L1.600 6A12 12 0 0 0 12 24l5-8z" fill="#0f9d58" />
            <path d="M12 6h10.500A12 12 0 0 1 12 24l5.200-9z" fill="#fbbc05" />
            <circle cx="12" cy="12" r="5.500" fill="#fff" /><circle cx="12" cy="12" r="4.300" fill="#4285f4" />
          </svg>
        </Tk>
        <Tk>
          <svg width="24" height="24" viewBox="0 0 24 24" className="block">
            <path d="M17 1L7.500 10 3 6.500 1 7.500v9l2 1L7.500 14l9.500 9 5-2V3z" fill="#2c9cea" />
            <path d="M17 7l-6 5 6 5z" fill="#17222d" /><path d="M3 9.500L5.500 12 3 14.500z" fill="#17222d" />
            <path d="M17 1l5 2v18l-5 2z" fill="#1f84d0" />
          </svg>
        </Tk>
        <Tk>
          <div className="w-[23px] h-[24px] flex items-center justify-center bg-gradient-to-b from-[#e23b40] to-[#8d1c22] text-[22px] leading-none italic font-bold text-white font-['Liberation_Sans']">S</div>
        </Tk>
        <Tk><FaWhatsapp size={25} color="#3ed65f" /></Tk>
        <Tk>
          <svg width="22" height="24" viewBox="0 0 22 24" className="block"><rect width="22" height="24" rx="2" fill="#2c8ee6" /><path d="M0 22l9-15 6 9 3-3 4 6v3a2 2 0 0 1-2 2H2a2 2 0 0 1-2-2z" fill="#7fcbff" /><circle cx="15" cy="6" r="2.500" fill="#e6f6ff" /></svg>
        </Tk>
        <Tk on>
          <svg width="24" height="24" viewBox="0 0 24 24" className="block"><circle cx="12" cy="12" r="11.500" fill="#1f8ad2" /><path d="M3 14c4 0 7-1 9 2 2-3 5-2 9-3-4 2-6 3-9 6-2-3-5-4-9-5zM6 8c3 0 5 0 6 2 1-2 3-2 6-2-3 1-4 2-6 4-1-2-3-3-6-4z" fill="#fff" /></svg>
        </Tk>
        <div className="ml-auto flex items-center h-[40px]">
          <div className="relative w-[22px] h-[22px] rounded-full bg-gradient-to-br from-[#f9b43a] to-[#ef6a1a] mr-[9px]">
            <div className="absolute right-[-5px] top-[-6px] w-[14px] h-[14px] rounded-full bg-[#c62f2f] text-[9px] leading-[14px] text-center text-white">1</div>
          </div>
          <span className="text-[14px] leading-none tracking-[-0.3px]">27°C</span>
          <span className="text-[14px] leading-none ml-[9px] tracking-[-0.3px]">Soleggiato</span>
          <div className="w-[42px] flex justify-end pr-[4px]">
            <svg width="14" height="8" viewBox="0 0 14 8" className="block"><path d="M1 7l6-6 6 6" fill="none" stroke="#fff" strokeWidth="1.200" /></svg>
          </div>
          <div className="w-[24px] flex justify-center">
            <svg width="14" height="17" viewBox="0 0 14 17" className="block"><rect x="1.500" y="5" width="8" height="7" rx="1" fill="none" stroke="#fff" /><path d="M10 7l3-1.500v6L10 10M3 2.500q3-2 6 0M3 14.500q3 2 6 0" fill="none" stroke="#fff" /></svg>
          </div>
          <div className="w-[24px] flex justify-center">
            <svg width="16" height="14" viewBox="0 0 16 14" className="block"><path d="M3.500 3H.5V.5h5V3M3 4v4h12V3H7M9 8v4M5 12.500h8" fill="none" stroke="#fff" /></svg>
          </div>
          <div className="w-[24px] flex justify-center">
            <svg width="16" height="14" viewBox="0 0 16 14" className="block"><path d="M1 9a3 3 0 0 1 2-5 4 4 0 0 1 7-1 3 3 0 0 1 3 3H6v4H2z" fill="#b8c2cc" /><circle cx="11" cy="9.500" r="4.500" fill="#2f8ee0" /><path d="M9 9.500h4" stroke="#fff" /></svg>
          </div>
          <div className="w-[23px] flex justify-center">
            <svg width="16" height="14" viewBox="0 0 16 14" className="block"><path d="M1 5h2l4-3.500v11L3 9H1z" fill="none" stroke="#fff" /><path d="M9.500 4.500q1.500 2.500 0 5" fill="none" stroke="#fff" /><path d="M12 3q2.500 4 0 8" fill="none" stroke="#8a8f96" /></svg>
          </div>
          <div className="w-[79px] pr-[9px] flex flex-col items-center text-[12px] leading-[19px]">
            <span>18:04</span>
            <span>10/09/2024</span>
          </div>
          <div className="relative w-[44px] h-[40px] flex items-center justify-center">
            <svg width="16" height="16" viewBox="0 0 16 16" className="block mt-[-4px] mr-[4px]"><path d="M0 0h16v11H8l-3 3v-3H0z" fill="#fff" /><path d="M3 3h10M3 5.500h10M3 8h7" stroke="#17222d" /></svg>
            <div className="absolute left-[22px] top-[13px] w-[16px] h-[16px] rounded-full bg-[#3a4550] border border-[#cfd4d8] text-[11px] leading-[14px] font-bold text-center text-white">4</div>
          </div>
        </div>
      </div>
    </div>
  );
}
